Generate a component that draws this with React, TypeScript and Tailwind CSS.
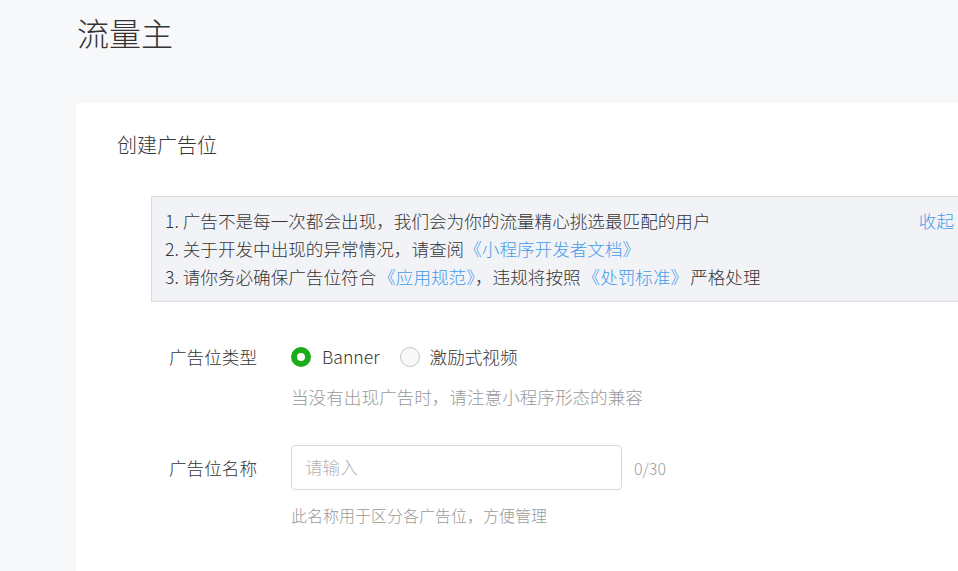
export default function App() {
  return (
    <div className="w-[958px] h-[571px] overflow-hidden bg-[#f7f8fa] font-['Noto_Sans_CJK_SC',sans-serif] font-light text-[#353535]">
      <div className="pl-[76px]">
        <div className="h-[103px] pt-[8px]">
          <h1 className="text-[32px] leading-[48px] text-[#333] pl-[1px]">流量主</h1>
        </div>
        <div className="bg-white w-[1000px] h-[468px] pl-[41px] pt-[28px]">
          <h2 className="text-[20px] leading-[28px] text-[#353535]">创建广告位</h2>
          <div className="mt-[37px] ml-[34px] w-[830px] border border-[#dcdcdc] bg-[#f2f3f7] pl-[13px] pr-[26px] py-[10px] flex justify-between text-[17.6px] leading-[28px]">
            <div>
              <p>1. 广告不是每一次都会出现，我们会为你的流量精心挑选最匹配的用户</p>
              <p>
                2. 关于开发中出现的异常情况，请查阅<span className="text-[#459ae9]">《小程序开发者文档》</span>
              </p>
              <p>
                3. 请你务必确保广告位符合<span className="text-[#459ae9] ml-[2px]">《应用规范》</span>，违规将按照<span className="text-[#459ae9] mx-[2px]">《处罚标准》</span>严格处理
              </p>
            </div>
            <span className="text-[#459ae9] shrink-0">收起</span>
          </div>

          <div className="ml-[52px] mt-[41px]">
            <div className="flex items-center h-[28px] text-[17.6px] leading-[28px]">
              <span className="w-[122px] shrink-0">广告位类型</span>
              <span className="w-[20px] h-[20px] rounded-full border-[6px] border-[#1aad19] bg-white box-border shrink-0"></span>
              <span className="ml-[11px]">Banner</span>
              <span className="ml-[20px] w-[20px] h-[20px] rounded-full border border-[#c7c7c7] bg-[#f7f8fa] box-border shrink-0"></span>
              <span className="ml-[10px]">激励式视频</span>
            </div>
            <p className="ml-[122px] mt-[12px] text-[17.6px] leading-[28px] text-[#9a9a9a]">
              当没有出现广告时，请注意小程序形态的兼容
            </p>

            <div className="flex items-center mt-[34px] h-[45px]">
              <span className="w-[122px] shrink-0 text-[17.6px] leading-[28px]">广告位名称</span>
              <div className="w-[331px] h-[45px] border border-[#d9d9d9] rounded-[4px] bg-white flex items-center pl-[13px] text-[17.6px] text-[#b2b2b2]">
                请输入
              </div>
              <span className="ml-[12px] text-[16px] text-[#9a9a9a]">0/30</span>
            </div>
            <p className="ml-[122px] mt-[13px] text-[16px] leading-[24px] text-[#9a9a9a]">
              此名称用于区分各广告位，方便管理
            </p>
          </div>
        </div>
      </div>
    </div>
  );
}
